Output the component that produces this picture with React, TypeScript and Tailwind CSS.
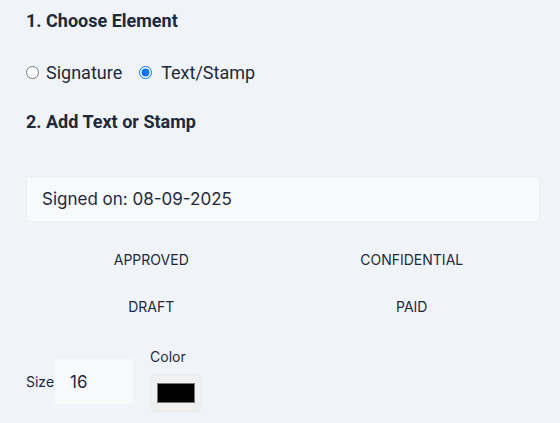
import { useState } from "react";

const stamps = ["APPROVED", "CONFIDENTIAL", "DRAFT", "PAID"];

export default function App() {
  const [mode, setMode] = useState<"signature" | "text">("text");
  const [text, setText] = useState("Signed on: 08-09-2025");
  const [size, setSize] = useState("16");
  const [color, setColor] = useState("#000000");

  return (
    <div className="min-h-[423px] w-[560px] bg-[#f0f4f8] px-[26px] pt-[9px] font-['Inter',sans-serif] text-[#1e293b]">
      <h3 className="font-['Roboto',sans-serif] text-[18px] font-bold leading-[24px]">1. Choose Element</h3>

      <div className="mt-[26px] flex items-center font-['Roboto',sans-serif] text-[18px]">
        <label className="flex items-center">
          <input
            type="radio"
            name="mode"
            checked={mode === "signature"}
            onChange={() => setMode("signature")}
            className="m-0 h-[13px] w-[13px]"
          />
          <span className="ml-[7px]">Signature</span>
        </label>
        <label className="ml-[17px] flex items-center">
          <input
            type="radio"
            name="mode"
            checked={mode === "text"}
            onChange={() => setMode("text")}
            className="m-0 h-[13px] w-[13px]"
          />
          <span className="ml-[9px]">Text/Stamp</span>
        </label>
      </div>

      <h3 className="mt-[24px] font-['Roboto',sans-serif] text-[18px] font-bold leading-[24px]">2. Add Text or Stamp</h3>

      <input
        value={text}
        onChange={(e) => setText(e.target.value)}
        className="mt-[42px] block h-[46px] w-[514px] border border-[#eceff3] bg-[#f8f9fb] px-[15px] text-[17px] text-[#1e293b] outline-none"
      />

      <div className="mt-[14px] grid grid-cols-2 gap-x-[16px] pl-[3px]">
        {stamps.map((s) => (
          <button
            key={s}
            onClick={() => setText(s)}
            className="h-[47px] text-center text-[14px] text-[#1e293b]"
          >
            {s}
          </button>
        ))}
      </div>

      <div className="mt-[18px] flex items-start">
        <div className="mt-[11px] flex items-center">
          <label className="text-[14px]">Size</label>
          <input
            value={size}
            onChange={(e) => setSize(e.target.value)}
            className="ml-[1px] h-[45px] w-[78px] bg-[#f8f9fb] px-[15px] text-[17px] outline-none"
          />
        </div>
        <div className="ml-[17px] flex flex-col">
          <span className="text-[14px] leading-[18px]">Color</span>
          <div className="mt-[8px] flex h-[38px] w-[52px] items-center justify-center rounded-[6px] border border-[#e8eaed] bg-[#f0f0f0]">
            <input
              type="color"
              value={color}
              onChange={(e) => setColor(e.target.value)}
              className="absolute h-0 w-0 opacity-0"
            />
            <div className="h-[20px] w-[38px] border border-[#777]" style={{ background: color }} />
          </div>
        </div>
      </div>
    </div>
  );
}
